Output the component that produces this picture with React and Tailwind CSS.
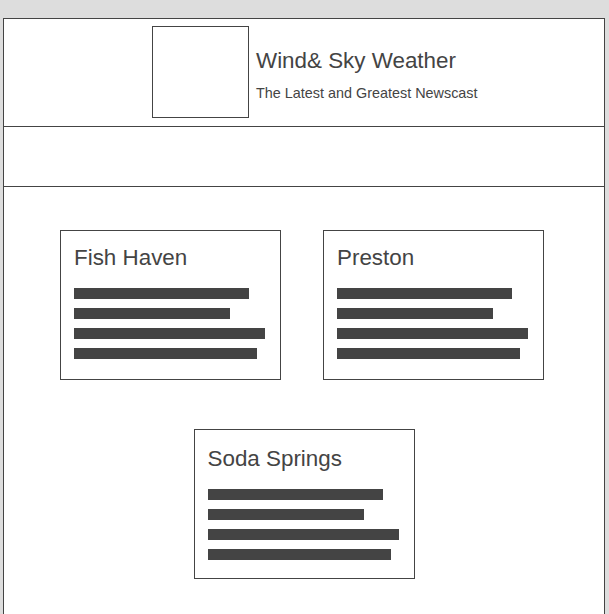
const cities = [
  { name: "Fish Haven", extra: "pt-[10px]" },
  { name: "Preston", extra: "pt-[10px]" },
  { name: "Soda Springs", extra: "ml-[4px] pt-[12px]" },
];

const bars = ["w-[175px]", "w-[156px]", "w-[191px]", "w-[183px]"];

const CityCard = ({ name, extra }) => (
  <div className={`w-[221px] h-[150px] border border-[#444] bg-white px-[13px] ${extra}`}>
    <h2 className="text-[22.4px] leading-normal text-[#444]">{name}</h2>
    <div className="mt-[13px] flex flex-col gap-[9px]">
      {bars.map((w) => (
        <div key={w} className={`${w} h-[11px] bg-[#444]`} />
      ))}
    </div>
  </div>
);

export default function App() {
  return (
    <div
      className="min-h-screen bg-[#dddddd] pt-[18px]"
      style={{ fontFamily: '"Liberation Sans", Arial, sans-serif' }}
    >
      <div className="mx-[3px] w-[602px] bg-white border border-[#444] min-h-[700px]">
        {/* Header */}
        <header className="flex items-start border-b border-[#444] pl-[148px] pt-[7px] pb-[8px]">
          <div className="w-[97px] h-[92px] border border-[#444]" />
          <div className="ml-[7px] pt-[18px] text-[#444]">
            <h1 className="text-[22.4px] leading-normal">Wind&amp; Sky Weather</h1>
            <p className="mt-[5px] text-[14.4px] leading-normal">
              The Latest and Greatest Newscast
            </p>
          </div>
        </header>

        {/* Nav */}
        <nav className="h-[60px] border-b border-[#444]" />

        {/* Cards */}
        <main className="flex flex-wrap justify-center gap-x-[42px] gap-y-[49px] pt-[43px] pb-[43px] pr-[4px]">
          {cities.map((c) => (
            <CityCard key={c.name} name={c.name} extra={c.extra} />
          ))}
        </main>
      </div>
    </div>
  );
}
